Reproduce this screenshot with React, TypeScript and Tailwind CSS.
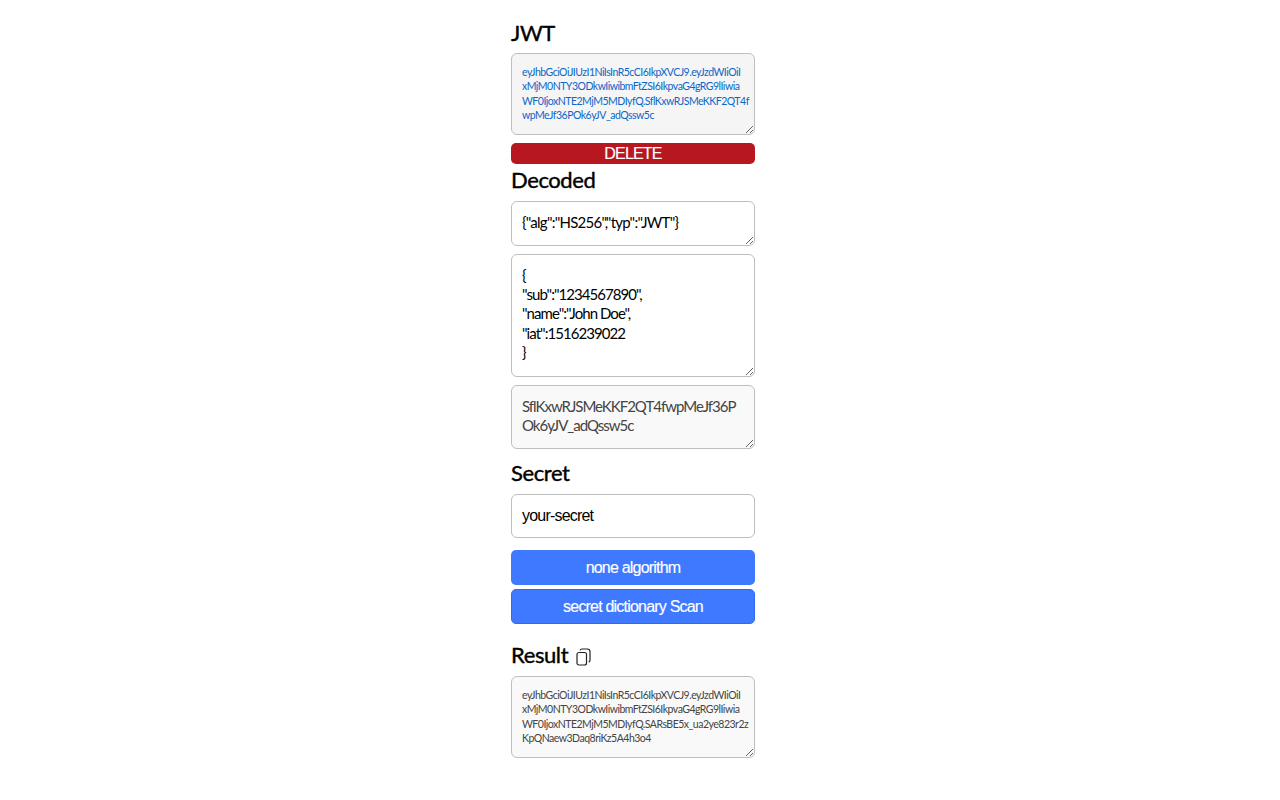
const FONT = "font-['Lato','Noto_Sans_CJK_KR',sans-serif]";
const ARIAL = "font-['Liberation_Sans',sans-serif] text-[16px] tracking-[-0.8px]";
const BUTTON_TEXT = "text-white [-webkit-text-stroke:0.15px_white]";

// line breaks fall where the reference wraps them
const JWT =
  'eyJhbGciOiJIUzI1NiIsInR5cCI6IkpXVCJ9.eyJzdWIiOiI\nxMjM0NTY3ODkwIiwibmFtZSI6IkpvaG4gRG9lIiwia\nWF0IjoxNTE2MjM5MDIyfQ.SflKxwRJSMeKKF2QT4f\nwpMeJf36POk6yJV_adQssw5c';
const RESULT =
  'eyJhbGciOiJIUzI1NiIsInR5cCI6IkpXVCJ9.eyJzdWIiOiI\nxMjM0NTY3ODkwIiwibmFtZSI6IkpvaG4gRG9lIiwia\nWF0IjoxNTE2MjM5MDIyfQ.SARsBE5x_ua2ye823r2z\nKpQNaew3Daq8riKz5A4h3o4';
const PAYLOAD = '{\n"sub":"1234567890",\n"name":"John Doe",\n"iat":1516239022\n}';

function Heading({ children }: { children: React.ReactNode }) {
  return <h2 className="text-[22px] leading-[28px] tracking-[-0.4px] text-black [-webkit-text-stroke:0.4px_black]">{children}</h2>;
}

function Area({ value, className }: { value: string; className: string }) {
  return (
    <textarea
      readOnly
      value={value}
      className={`block w-full rounded-[6px] border border-[#bebebe] px-[10px] outline-none ${FONT} ${className}`}
    />
  );
}

function CopyIcon() {
  return (
    <svg width="15" height="18" viewBox="0 0 15 18" fill="none" stroke="#222" strokeWidth="1.2" className="ml-[8px] mt-[3px]">
      <rect x="1" y="4.5" width="9.5" height="12.5" rx="2" />
      <path d="M4 2.4C4.3 1.5 5 1 5.8 1h5.6C12.8 1 14 2.2 14 3.6v8.6c0 .9-.5 1.6-1.3 1.9" />
    </svg>
  );
}

export default function App() {
  return (
    <div className={`flex min-h-[800px] justify-center bg-white pr-[14px] ${FONT}`}>
      <div className="flex w-[244px] flex-col pt-[19px]">
        <Heading>JWT</Heading>
        <Area value={JWT} className="mt-[6px] h-[82px] overflow-hidden whitespace-pre bg-[#f5f5f5] py-[11px] text-[10.5px] leading-[14.3px] tracking-[-0.5px] text-[#0b66c8]" />
        <button className={`mt-[8px] h-[21px] rounded-[5px] bg-[#b71820] leading-[21px] ${BUTTON_TEXT} ${ARIAL}`}>DELETE</button>
        <div className="mt-[2px]"><Heading>Decoded</Heading></div>
        <Area value={'{"alg":"HS256","typ":"JWT"}'} className="mt-[7px] h-[45px] bg-white py-[11px] text-[15px] leading-[19px] tracking-[-0.75px] text-black" />
        <Area value={PAYLOAD} className="mt-[8px] h-[123px] bg-white py-[11px] text-[15px] leading-[19.2px] tracking-[-0.95px] text-black" />
        <Area value="SflKxwRJSMeKKF2QT4fwpMeJf36POk6yJV_adQssw5c" className="mt-[8px] h-[64px] break-all bg-[#f9f9f9] py-[11px] text-[15px] leading-[19.2px] tracking-[-1px] text-[#444]" />
        <div className="mt-[10px]"><Heading>Secret</Heading></div>
        <input
          readOnly
          value="your-secret"
          className={`mt-[7px] h-[44px] w-full rounded-[6px] border border-[#bebebe] bg-white px-[10px] text-black outline-none ${ARIAL}`}
        />
        <button className={`mt-[12px] h-[35px] rounded-[5px] bg-[#3f79ff] ${BUTTON_TEXT} ${ARIAL}`}>none algorithm</button>
        <button className={`mt-[4px] h-[35px] rounded-[5px] border border-[#2f6bf0] bg-[#3f79ff] ${BUTTON_TEXT} ${ARIAL}`}>secret dictionary Scan</button>
        <div className="mt-[17px] flex items-center"><Heading>Result</Heading><CopyIcon /></div>
        <Area value={RESULT} className="mt-[7px] h-[82px] overflow-hidden whitespace-pre bg-[#f9f9f9] py-[11px] text-[10.5px] leading-[14.3px] tracking-[-0.5px] text-[#444]" />
      </div>
    </div>
  );
}
